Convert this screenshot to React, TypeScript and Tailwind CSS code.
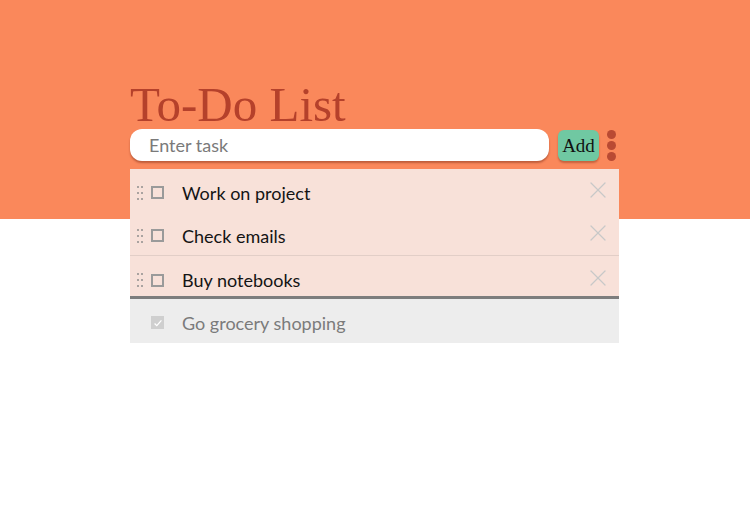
import { X } from "lucide-react";

const tasks = ["Work on project", "Check emails", "Buy notebooks"];

function DragHandle() {
  return (
    <div className="grid grid-cols-2 gap-x-[2px] gap-y-[4px]">
      {[0, 1, 2, 3, 4, 5].map((i) => (
        <span key={i} className="h-[2px] w-[2px] bg-[#aaa3a0]" />
      ))}
    </div>
  );
}

function TaskRow({ label, className }: { label: string; className: string }) {
  return (
    <li className={"flex items-center bg-[#f8e1d9] " + className}>
      <div className="flex w-[52px] items-center pl-[7px]">
        <DragHandle />
        <span className="ml-[8px] h-[13px] w-[13px] border-2 border-[#9a9a9a]" />
      </div>
      <span className="flex-1 pt-[1px] text-[18px] text-[#141414]">{label}</span>
      <X className="mr-[7px] -mt-[5px] h-[28px] w-[28px] text-[#c8c8c8]" strokeWidth={1.1} />
    </li>
  );
}

export default function App() {
  return (
    <div
      className="relative min-h-[532px] bg-white"
      style={{ fontFamily: "Lato, 'Open Sans', sans-serif" }}
    >
      <div className="absolute inset-x-0 top-0 h-[219px] bg-[#fa885b]" />
      <div className="relative ml-[130px] w-[489px] pt-[80px]">
        <h1
          className="text-[49px] leading-[50px] text-[#b5412b]"
          style={{ fontFamily: "'Liberation Serif', 'DejaVu Serif', serif" }}
        >
          To-Do List
        </h1>
        <div className="mt-[-1px] flex items-center">
          <div className="flex h-[32px] w-[419px] items-center rounded-[12px] bg-white pl-[19px] shadow-[0_2px_2px_rgba(120,40,20,0.45)]">
            <span className="text-[18px] text-[#7a7a7a]">Enter task</span>
          </div>
          <button
            className="ml-[9px] flex h-[31px] w-[41px] items-center justify-center rounded-[6px] bg-[#70c8a2] pt-[2px] text-[19px] text-[#111] shadow-[0_2px_2px_rgba(120,40,20,0.4)]"
            style={{ fontFamily: "'Liberation Serif', 'DejaVu Serif', serif" }}
          >
            Add
          </button>
          <div className="ml-[8px] flex flex-col gap-[2px]">
            <span className="h-[9px] w-[9px] rounded-full bg-[#b94a33]" />
            <span className="h-[9px] w-[9px] rounded-full bg-[#b94a33]" />
            <span className="h-[9px] w-[9px] rounded-full bg-[#b94a33]" />
          </div>
        </div>
        <ul className="mt-[8px]">
          <TaskRow label={tasks[0]} className="h-[43px] pt-[4px]" />
          <TaskRow label={tasks[1]} className="h-[44px] border-b border-[#e2cec7] pt-[4px]" />
          <TaskRow label={tasks[2]} className="h-[40px] pt-[8px]" />
          <li className="flex h-[47px] items-center border-t-[3px] border-[#7d7d7d] bg-[#ededed] pt-[3px]">
            <div className="flex w-[52px] items-center pl-[21px]">
              <span className="flex h-[13px] w-[13px] items-center justify-center bg-[#cfcfcf]">
                <svg viewBox="0 0 14 14" className="h-[12px] w-[12px]">
                  <path d="M3 7.5l2.6 2.6L11 4" fill="none" stroke="#fff" strokeWidth="1.5" />
                </svg>
              </span>
            </div>
            <span className="pt-[1px] text-[18px] text-[#7b7b7b]">Go grocery shopping</span>
          </li>
        </ul>
      </div>
    </div>
  );
}
